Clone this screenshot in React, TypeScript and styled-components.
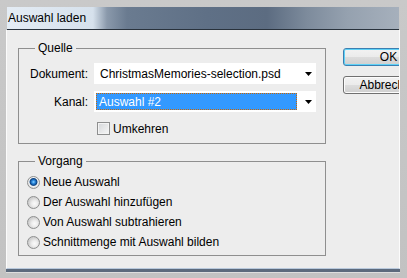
import styled, { createGlobalStyle, css } from "styled-components";

const GlobalStyle = createGlobalStyle`
  html, body {
    margin: 0;
    padding: 0;
  }
  body {
    width: 407px;
    height: 278px;
    overflow: hidden;
    background: #c4c4c4;
    font-family: "Liberation Sans", Arial, sans-serif;
    font-size: 12px;
    color: #000;
  }
`;

const radios = [
  "Neue Auswahl",
  "Der Auswahl hinzufügen",
  "Von Auswahl subtrahieren",
  "Schnittmenge mit Auswahl bilden",
];

const Arrow = () => (
  <svg width="7" height="4" viewBox="0 0 7 4">
    <polygon points="0,0 7,0 3.5,4" fill="#000" />
  </svg>
);

const App = () => {
  return (
    <Frame>
      <GlobalStyle />
      <Window>
        <TitleBar>Auswahl laden</TitleBar>
        <Client>
          <Groups>
            <Group $height={103}>
              <Legend>Quelle</Legend>
              <SourceGrid>
                <FieldLabel>Dokument:</FieldLabel>
                <Combo>
                  <ComboValue>ChristmasMemories-selection.psd</ComboValue>
                  <ComboArrow>
                    <Arrow />
                  </ComboArrow>
                </Combo>
                <FieldLabel>Kanal:</FieldLabel>
                <Combo>
                  <ComboValue $focused>Auswahl #2</ComboValue>
                  <ComboArrow>
                    <Arrow />
                  </ComboArrow>
                </Combo>
                <span />
                <CheckRow>
                  <CheckBox />
                  <span>Umkehren</span>
                </CheckRow>
              </SourceGrid>
            </Group>

            <Group $height={102}>
              <Legend>Vorgang</Legend>
              <RadioList>
                {radios.map((label, i) => (
                  <RadioRow key={label}>
                    <RadioDot $checked={i === 0} />
                    <span>{label}</span>
                  </RadioRow>
                ))}
              </RadioList>
            </Group>
          </Groups>

          <Buttons>
            <Button $default>OK</Button>
            <Button>Abbrechen</Button>
          </Buttons>
        </Client>
      </Window>
    </Frame>
  );
};

const Frame = styled.div`
  width: 407px;
  height: 278px;
  box-sizing: border-box;
  padding: 7px 7px 0 6px;
  background: linear-gradient(#c9c9c9, #c2c2c2);
`;

const Window = styled.div`
  display: flex;
  flex-direction: column;
  height: 262px;
  overflow: hidden;
  border-bottom: 3px solid #5c6a7d;
  box-shadow: 0 1px 0 #dedede;
`;

const TitleBar = styled.div`
  height: 22px;
  line-height: 22px;
  margin: 0 1px;
  padding-left: 1px;
  border-bottom: 1px solid #29323c;
  font-size: 12px;
  color: #000;
  white-space: nowrap;
  background: linear-gradient(
    90deg,
    #e4ecf4 0px,
    #d6e1ec 86px,
    #8a99ab 100px,
    #6a7b90 120px,
    #5f7086 200px,
    #5c6c81 260px,
    #7d8b9c 300px,
    #95a1af 340px,
    #a6b0bc 392px
  );
`;

const Client = styled.div`
  flex: 1;
  display: flex;
  padding: 11px 0 0 11px;
  background: #ededed;
  border-left: 1px solid #fbfbfb;
  border-right: 1px solid #fbfbfb;
  border-bottom: 1px solid #b9c9dc;
  overflow: hidden;
`;

const Groups = styled.div`
  display: flex;
  flex-direction: column;
  gap: 10px;
  flex-shrink: 0;
`;

const Group = styled.fieldset<{ $height: number }>`
  margin: 0;
  padding: 0;
  width: 308px;
  height: ${({ $height }) => $height}px;
  box-sizing: border-box;
  min-width: 0;
  border: 1px solid #8f8f8f;
`;

const Legend = styled.legend`
  margin-left: 16px;
  padding: 0 3px;
  line-height: 14px;
  font-size: 12px;
`;

const SourceGrid = styled.div`
  display: grid;
  grid-template-columns: 75px 222px;
  grid-template-rows: 21px 21px 19px;
  row-gap: 7px;
  padding-top: 8px;
  align-items: center;
`;

const FieldLabel = styled.span`
  text-align: right;
  padding-right: 6px;
`;

const Combo = styled.div`
  display: flex;
  height: 21px;
  box-sizing: border-box;
  background: #fff;
`;

const ComboValue = styled.div<{ $focused?: boolean }>`
  flex: 1;
  display: flex;
  align-items: center;
  margin: 2px 0 2px 2px;
  padding-left: 4px;
  white-space: nowrap;
  overflow: hidden;
  ${({ $focused }) =>
    $focused &&
    css`
      padding-left: 3px;
      background: #3399ff;
      color: #fff;
      outline: 1px dotted #cc6600;
      outline-offset: -1px;
    `}
`;

const ComboArrow = styled.div`
  width: 19px;
  display: flex;
  align-items: center;
  justify-content: flex-end;
  padding-right: 4px;
  box-sizing: border-box;
`;

const CheckRow = styled.label`
  display: flex;
  align-items: center;
  gap: 3px;
  padding-left: 3px;
`;

const CheckBox = styled.span`
  width: 13px;
  height: 13px;
  box-sizing: border-box;
  border: 1px solid #8e8f8f;
  background: linear-gradient(135deg, #d4d6d9, #f7f7f7);
  box-shadow: inset 0 0 0 1px #f3f3f3;
`;

const RadioList = styled.div`
  display: flex;
  flex-direction: column;
  padding: 4px 0 0 8px;
`;

const RadioRow = styled.label`
  display: flex;
  align-items: center;
  gap: 3px;
  height: 20px;
  white-space: nowrap;
`;

const RadioDot = styled.span<{ $checked?: boolean }>`
  width: 13px;
  height: 13px;
  box-sizing: border-box;
  border-radius: 50%;
  border: 1px solid #8e8f8f;
  background: ${({ $checked }) =>
    $checked
      ? "radial-gradient(circle at 50% 45%, #8fd3ff 0px, #2a8ae0 1.6px, #0d4384 3.4px, #6f8fb0 3.9px, #f4f4f4 4.4px, #dcdcdc 6px)"
      : "radial-gradient(circle at 60% 60%, #fbfbfb 0px, #ececec 3px, #d0d0d0 6px)"};
`;

const Buttons = styled.div`
  display: flex;
  flex-direction: column;
  gap: 10px;
  margin-left: 17px;
  padding-top: 7px;
  flex-shrink: 0;
`;

const Button = styled.button<{ $default?: boolean }>`
  width: 91px;
  height: 18px;
  padding: 0;
  box-sizing: border-box;
  border-radius: 3px;
  font-family: inherit;
  font-size: 12px;
  line-height: 16px;
  color: #000;
  text-align: center;
  background: linear-gradient(#f2f2f2 0%, #ebebeb 50%, #dddddd 50%, #cfcfcf 100%);
  border: 1px solid ${({ $default }) => ($default ? "#3c7fb1" : "#707070")};
  box-shadow: inset 0 0 0 1px
    ${({ $default }) => ($default ? "#5fd2f7" : "#fcfcfc")};
`;

export default App;
